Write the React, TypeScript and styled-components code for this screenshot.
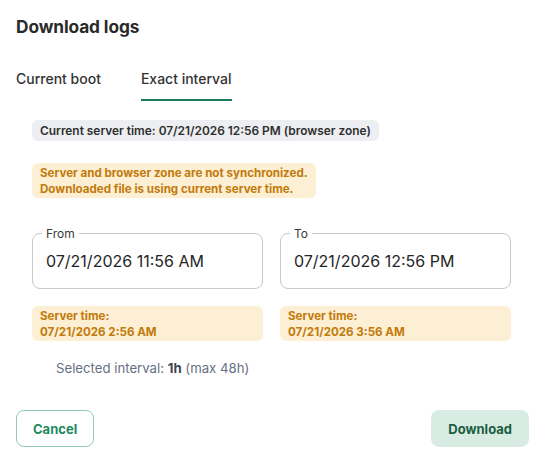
import React, { useState } from 'react'
import styled, { createGlobalStyle } from 'styled-components'

const GlobalStyle = createGlobalStyle`
  body {
    margin: 0;
    background: #ffffff;
    font-family: Inter, "Noto Sans", sans-serif;
    color: #2b2b2b;
  }
`

const Dialog = styled.div`
  width: 546px;
  height: 466px;
  box-sizing: border-box;
  padding: 16px 17px 19px 16px;
  display: flex;
  flex-direction: column;
`

const Title = styled.h2`
  margin: 0;
  font-size: 17.3px;
  font-weight: 700;
  color: #2a2a2a;
  letter-spacing: -0.1px;
`

const Tabs = styled.div`
  display: flex;
  gap: 40px;
  margin-top: 33px;
`

const Tab = styled.button<{ $active?: boolean }>`
  background: none;
  border: none;
  padding: 0 0 12px;
  font-family: inherit;
  font-size: 14px;
  font-weight: 500;
  color: #333;
  cursor: pointer;
  border-bottom: 2px solid ${p => (p.$active ? '#1f7a5b' : 'transparent')};
`

const Body = styled.div`
  padding: 19px 18px 0 16px;
  display: flex;
  flex-direction: column;
`

const Chip = styled.div`
  align-self: flex-start;
  background: #eceef1;
  border-radius: 6px;
  padding: 4px 8px;
  font-size: 11.9px;
  line-height: 13px;
  font-weight: 600;
  color: #2f2f2f;
`

const Notice = styled.div<{ $block?: boolean }>`
  align-self: ${p => (p.$block ? 'stretch' : 'flex-start')};
  background: #fdefd3;
  border-radius: 6px;
  padding: 2px 8px 1px;
  font-size: 11.6px;
  font-weight: 700;
  line-height: 16px;
  color: #c27a0c;
`

const Warning = styled(Notice)`
  margin-top: 22px;
`

const Grid = styled.div`
  display: grid;
  grid-template-columns: 1fr 1fr;
  column-gap: 17px;
  row-gap: 17px;
  margin-top: 28px;
`

const Field = styled.fieldset`
  margin: 0;
  padding: 0 13px;
  height: 63px;
  box-sizing: border-box;
  border: 1px solid #c9c9c9;
  border-radius: 8px;
  display: flex;
  align-items: center;
  min-width: 0;
`

const Legend = styled.legend`
  padding: 0 4px;
  margin-left: -4px;
  font-size: 12px;
  color: #3a3a3a;
`

const Value = styled.div`
  font-size: 16px;
  color: #262626;
  margin-top: -8px;
`

const Interval = styled.div`
  margin: 19px 0 0 24px;
  font-size: 13.2px;
  color: #667085;

  b {
    color: #3e4550;
    font-weight: 700;
  }
`

const Footer = styled.div`
  margin-top: auto;
  display: flex;
  justify-content: space-between;
`

const Button = styled.button<{ $primary?: boolean }>`
  height: 37px;
  padding: 0 16px;
  border-radius: 8px;
  font-family: inherit;
  font-size: 13px;
  font-weight: 700;
  cursor: pointer;
  border: 1px solid ${p => (p.$primary ? '#d8ece3' : '#8fcab3')};
  background: ${p => (p.$primary ? '#d8ece3' : '#ffffff')};
  color: ${p => (p.$primary ? '#1b5e3f' : '#1f8a5e')};
`

export default function App() {
  const [tab, setTab] = useState('interval')
  return (
    <>
      <GlobalStyle />
      <Dialog>
        <Title>Download logs</Title>
        <Tabs>
          <Tab $active={tab === 'boot'} onClick={() => setTab('boot')}>Current boot</Tab>
          <Tab $active={tab === 'interval'} onClick={() => setTab('interval')}>Exact interval</Tab>
        </Tabs>
        <Body>
          <Chip>Current server time: 07/21/2026 12:56 PM (browser zone)</Chip>
          <Warning>
            Server and browser zone are not synchronized.
            <br />
            Downloaded file is using current server time.
          </Warning>
          <Grid>
            <Field>
              <Legend>From</Legend>
              <Value>07/21/2026 11:56 AM</Value>
            </Field>
            <Field>
              <Legend>To</Legend>
              <Value>07/21/2026 12:56 PM</Value>
            </Field>
            <Notice $block>
              Server time:
              <br />
              07/21/2026 2:56 AM
            </Notice>
            <Notice $block>
              Server time:
              <br />
              07/21/2026 3:56 AM
            </Notice>
          </Grid>
          <Interval>
            Selected interval: <b>1h</b> (max 48h)
          </Interval>
        </Body>
        <Footer>
          <Button>Cancel</Button>
          <Button $primary>Download</Button>
        </Footer>
      </Dialog>
    </>
  )
}
